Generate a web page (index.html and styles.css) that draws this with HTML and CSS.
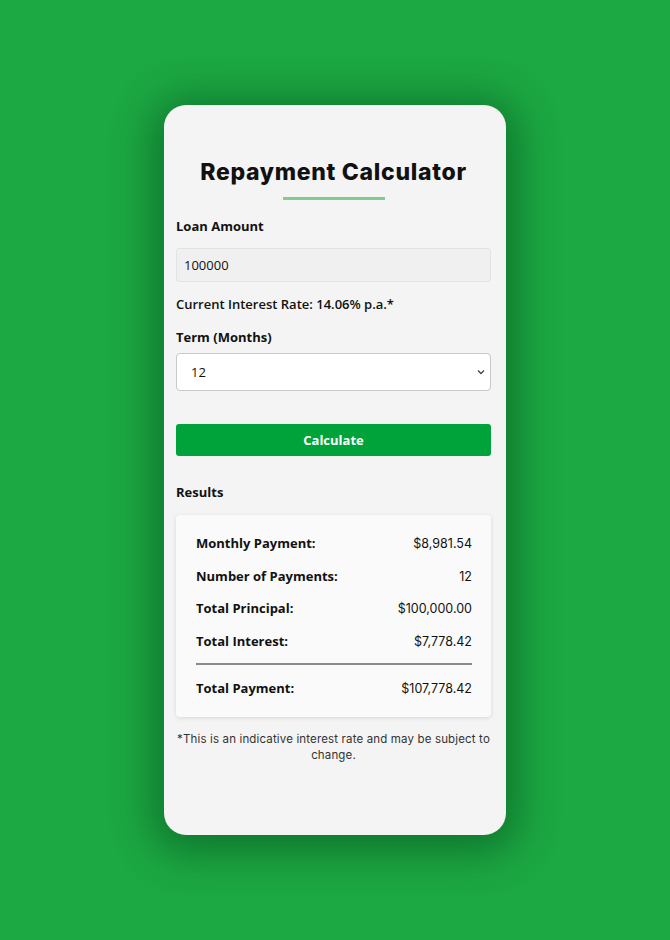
FILE: index.html
```html
<!DOCTYPE html>
<html>
<head>
<meta charset="utf-8">
<link rel="stylesheet" href="styles.css">
</head>
<body>
<div class="stage">
  <div class="card">
    <h1 class="title">Repayment Calculator</h1>
    <div class="underline"></div>
    <label class="label">Loan Amount</label>
    <div class="input">100000</div>
    <div class="rate">Current Interest Rate: 14.06% p.a.*</div>
    <label class="label">Term (Months)</label>
    <div class="select"><span>12</span>
      <svg class="chev" width="8" height="6" viewBox="0 0 8 6"><path d="M1 1.5 L4 4.5 L7 1.5" fill="none" stroke="#444" stroke-width="1.3"/></svg>
    </div>
    <button class="btn">Calculate</button>
    <div class="results-h">Results</div>
    <div class="results">
      <div class="row"><span class="k">Monthly Payment:</span><span class="v">$8,981.54</span></div>
      <div class="row"><span class="k">Number of Payments:</span><span class="v">12</span></div>
      <div class="row"><span class="k">Total Principal:</span><span class="v">$100,000.00</span></div>
      <div class="row"><span class="k">Total Interest:</span><span class="v">$7,778.42</span></div>
      <div class="divider"></div>
      <div class="row"><span class="k">Total Payment:</span><span class="v">$107,778.42</span></div>
    </div>
    <p class="note">*This is an indicative interest rate and may be subject to change.</p>
  </div>
</div>
</body>
</html>
```
FILE: styles.css
```css
html, body { margin: 0; padding: 0; }
body {
  background: #1ca843;
  width: 670px;
  height: 940px;
  overflow: hidden;
  font-family: "Open Sans", "Liberation Sans", sans-serif;
  color: #111;
}
.stage {
  display: flex;
  justify-content: center;
  padding-top: 105px;
}
.card {
  width: 342px;
  height: 730px;
  box-sizing: border-box;
  background: #f4f4f4;
  border-radius: 22px;
  box-shadow: 0 6px 40px 12px rgba(0, 60, 20, 0.45);
  padding: 52px 15px 0 12px;
  display: flex;
  flex-direction: column;
}
.title {
  margin: 0;
  text-align: center;
  font-family: "Inter", "Lato", sans-serif;
  font-weight: 800;
  font-size: 23px;
  line-height: 30px;
  letter-spacing: 0.7px;
  color: #111;
}
.underline {
  align-self: center;
  width: 102px;
  height: 3px;
  background: #7ecf8d;
  margin: 10px 0 0 0;
}
.label {
  font-weight: 700;
  font-size: 13px;
  line-height: 18px;
  margin-top: 17px;
}
.input {
  margin-top: 13px;
  height: 34px;
  box-sizing: border-box;
  border: 1px solid #e3e3e3;
  background: #f0f0f0;
  border-radius: 3px;
  padding-left: 7px;
  font-size: 13px;
  line-height: 32px;
}
.rate {
  font-weight: 600;
  font-size: 13px;
  line-height: 18px;
  margin-top: 13px;
}
.rate + .label { margin-top: 15px; }
.select {
  margin-top: 7px;
  height: 38px;
  box-sizing: border-box;
  border: 1px solid #c8c8c8;
  background: #fff;
  border-radius: 4px;
  display: flex;
  align-items: center;
  justify-content: space-between;
  padding: 0 5px 0 14px;
  font-size: 13px;
}
.btn {
  margin-top: 33px;
  height: 32px;
  border: none;
  border-radius: 3px;
  background: #00a33a;
  color: #fff;
  font-family: "Open Sans", "Liberation Sans", sans-serif;
  font-weight: 700;
  font-size: 13px;
  padding: 0;
}
.results-h {
  margin-top: 27px;
  font-weight: 700;
  font-size: 13px;
  line-height: 18px;
}
.results {
  margin-top: 14px;
  background: #fafafa;
  border-radius: 4px;
  box-shadow: 0 1px 4px rgba(0, 0, 0, 0.12);
  padding: 19px 19px 19px 20px;
  display: flex;
  flex-direction: column;
  gap: 13.5px;
}
.row {
  display: flex;
  justify-content: space-between;
  font-size: 13px;
  line-height: 19px;
}
.k { font-weight: 700; }
.v {
  font-family: "Inter", "Lato", sans-serif;
  font-size: 12.5px;
}
.divider {
  height: 2px;
  background: #8a8a8a;
  margin: -1px 0 0 0;
}
.note {
  margin: 14px -6px 0 -6px;
  text-align: center;
  font-family: "Inter", "Lato", sans-serif;
  font-size: 11.5px;
  letter-spacing: 0.15px;
  line-height: 16px;
  color: #333;
}
```
